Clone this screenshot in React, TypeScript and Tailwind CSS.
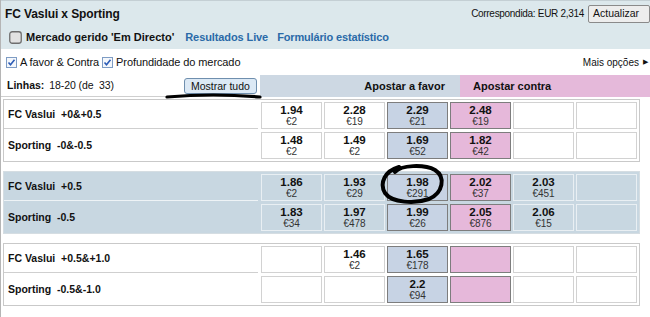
import React from "react";

type Cell = { p?: string; s?: string; k?: "b" | "l" | "n" };

const rows: { bg: "w" | "g"; r: { label: string; cells: Cell[] }[] }[] = [
  {
    bg: "w",
    r: [
      { label: "FC Vaslui\u00a0\u00a0+0&+0.5", cells: [{ p: "1.94", s: "€2" }, { p: "2.28", s: "€19" }, { p: "2.29", s: "€21", k: "b" }, { p: "2.48", s: "€19", k: "l" }, {}, {}] },
      { label: "Sporting\u00a0\u00a0-0&-0.5", cells: [{ p: "1.48", s: "€2" }, { p: "1.49", s: "€2" }, { p: "1.69", s: "€52", k: "b" }, { p: "1.82", s: "€42", k: "l" }, {}, {}] },
    ],
  },
  {
    bg: "g",
    r: [
      { label: "FC Vaslui\u00a0\u00a0+0.5", cells: [{ p: "1.86", s: "€2" }, { p: "1.93", s: "€29" }, { p: "1.98", s: "€291", k: "b" }, { p: "2.02", s: "€37", k: "l" }, { p: "2.03", s: "€451" }, {}] },
      { label: "Sporting\u00a0\u00a0-0.5", cells: [{ p: "1.83", s: "€34" }, { p: "1.97", s: "€478" }, { p: "1.99", s: "€26", k: "b" }, { p: "2.05", s: "€876", k: "l" }, { p: "2.06", s: "€15" }, {}] },
    ],
  },
  {
    bg: "w",
    r: [
      { label: "FC Vaslui\u00a0\u00a0+0.5&+1.0", cells: [{}, { p: "1.46", s: "€2" }, { p: "1.65", s: "€178", k: "b" }, { k: "l" }, {}, {}] },
      { label: "Sporting\u00a0\u00a0-0.5&-1.0", cells: [{}, {}, { p: "2.2", s: "€94", k: "b" }, { k: "l" }, {}, {}] },
    ],
  },
];

function Check() {
  return (
    <svg width="11" height="11" viewBox="0 0 11 11" className="shrink-0">
      <rect x="0.5" y="0.5" width="10" height="10" fill="#f4f7fb" stroke="#7e9cc4" />
      <path d="M2.5 5.5 L4.5 7.8 L8.5 2.8" fill="none" stroke="#2c5cb6" strokeWidth="1.6" />
    </svg>
  );
}

function OddsCell({ c, g }: { c: Cell; g: boolean }) {
  let cls = g ? "bg-[#c8d7e1] border-[#e9eff3]" : "bg-white border-[#d2d2d2]";
  if (c.k === "b") cls = "bg-[#c7d3e4] border-[#7d7d7d]";
  if (c.k === "l") cls = "bg-[#e6b8da] border-[#7d7d7d]";
  return (
    <div className={`w-[61px] h-[27px] border ${cls} flex flex-col items-center justify-center leading-[12px]`}>
      {c.p && <span className="font-bold text-[11.5px] text-[#111]">{c.p}</span>}
      {c.s && <span className="text-[10px] text-[#333]">{c.s}</span>}
    </div>
  );
}

export default function App() {
  return (
    <div
      className="w-[650px] h-[317px] bg-white relative overflow-hidden border-l border-[#b5b5b5] text-[#111]"
      style={{ fontFamily: '"Liberation Sans", Arial, sans-serif' }}
    >
      {/* header */}
      <div className="h-[49px] bg-[#dce8ec] border-t border-[#c4cfd4]">
        <div className="h-[25px] flex items-center justify-between pl-[4px]">
          <span className="font-bold text-[12px] tracking-[-0.1px]">FC Vaslui x Sporting</span>
          <div className="flex items-center gap-[4px]">
            <span className="text-[10px] tracking-[-0.3px]">Correspondida: EUR 2,314</span>
            <button className="h-[18px] w-[62px] border border-[#8a8a8a] bg-[#ededed] rounded-[2px] text-[10.5px] text-[#111] text-left pl-[4px]">
              Actualizar
            </button>
          </div>
        </div>
        <div className="h-[22px] flex items-center pl-[8px]">
          <svg width="13" height="13" viewBox="0 0 13 13" className="shrink-0">
            <rect x="0.75" y="0.75" width="11.5" height="11.5" rx="2.5" fill="#e2e2e2" stroke="#6e6e6e" strokeWidth="1.3" />
          </svg>
          <span className="ml-[4px] font-bold text-[11px] tracking-[0px]">Mercado gerido 'Em Directo'</span>
          <span className="ml-[11px] font-bold text-[11px] text-[#2a6aa8] tracking-[-0.1px]">Resultados Live</span>
          <span className="ml-[9px] font-bold text-[11px] text-[#2a6aa8] tracking-[-0.15px]">Formulário estatístico</span>
        </div>
      </div>
      {/* checkbox row */}
      <div className="h-[26px] flex items-center justify-between pl-[5px] pr-[2px]">
        <div className="flex items-center text-[11px] tracking-[-0.1px]">
          <Check />
          <span className="ml-[3px]">A favor &amp; Contra</span>
          <span className="ml-[3px]"><Check /></span>
          <span className="ml-[3px]">Profundidade do mercado</span>
        </div>
        <div className="flex items-center text-[10px] tracking-[0px]">
          <span>Mais opções</span>
          <span className="ml-[4px] text-[7px]">▶</span>
        </div>
      </div>
      {/* linhas row */}
      <div className="h-[22px] flex items-stretch">
        <div className="w-[259px] flex items-center pl-[6px] text-[10.5px] border-b border-[#cfcfcf]">
          <span className="font-bold">Linhas:</span>
          <span className="ml-[5px] tracking-[-0.1px]">18-20 (de&nbsp;&nbsp;33)</span>
          <button className="ml-[70px] h-[16px] w-[73px] border border-[#6f8fae] bg-[#dce9f5] rounded-[3px] text-[10.5px] text-[#111]">
            Mostrar tudo
          </button>
        </div>
        <div className="w-[200px] bg-[#cdd8e3] flex items-center justify-end pr-[15px] font-bold text-[11px]">
          Apostar a favor
        </div>
        <div className="flex-1 bg-[#e5b9da] flex items-center pl-[13px] font-bold text-[11px]">
          Apostar contra
        </div>
      </div>
      {/* tables */}
      <div className="mt-[2px] pl-[2px] flex flex-col gap-[9px]">
        {rows.map((t, ti) => {
          const g = t.bg === "g";
          return (
            <div
              key={ti}
              className={`w-[637px] border p-[2px] pl-0 flex flex-col gap-[3px] ${g ? "bg-[#c8d7e1] border-[#d5dde2]" : "bg-white border-[#c9c9c9]"}`}
            >
              {t.r.map((r, ri) => (
                <div key={ri} className="flex items-stretch gap-[3px] h-[27px]">
                  <div
                    className={`w-[254px] flex items-center pl-[4px] font-bold text-[10.5px] ${ri === 0 ? (g ? "border-b border-[#eef3f6]" : "border-b border-[#cfcfcf]") : ""}`}
                  >
                    {r.label}
                  </div>
                  <div className="flex gap-[2px]">
                    {r.cells.map((c, ci) => (
                      <OddsCell key={ci} c={c} g={g} />
                    ))}
                  </div>
                </div>
              ))}
            </div>
          );
        })}
      </div>
      {/* annotations */}
      <svg className="absolute left-0 top-0 pointer-events-none" width="650" height="317">
        <path d="M166 97 Q 212 93 259 97" fill="none" stroke="#000" strokeWidth="3.2" strokeLinecap="round" />
        <path
          d="M394 172 C 400 165, 423 164, 434 170 C 445 177, 442 193, 428 199 C 414 204, 391 203, 384 193 C 378 183, 384 171, 398 167"
          fill="none"
          stroke="#000"
          strokeWidth="4"
          strokeLinecap="round"
        />
      </svg>
    </div>
  );
}
